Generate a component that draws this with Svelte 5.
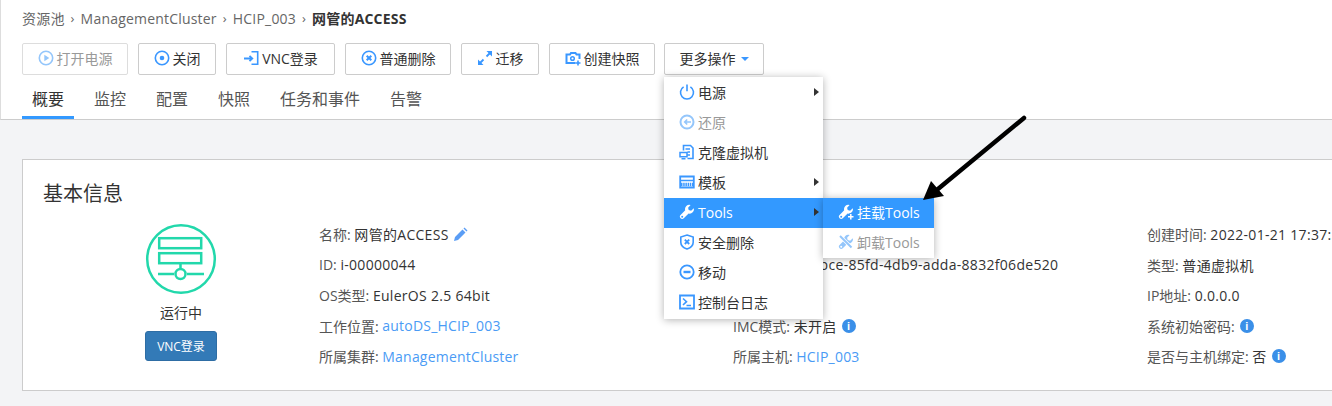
<script>
  const crumbs = ['资源池', 'ManagementCluster', 'HCIP_003'];
  const tabs = ['概要', '监控', '配置', '快照', '任务和事件', '告警'];
  const menu = [
    { icon: 'power', label: '电源', sub: true },
    { icon: 'restore', label: '还原', off: true },
    { icon: 'clone', label: '克隆虚拟机' },
    { icon: 'template', label: '模板', sub: true },
    { icon: 'tools', label: 'Tools', sub: true, on: true },
    { icon: 'shield', label: '安全删除' },
    { icon: 'move', label: '移动' },
    { icon: 'console', label: '控制台日志' }
  ];
  const col1 = [
    [['名称: '], ['网管的ACCESS', 'v'], ['pen']],
    [['ID: '], ['i-00000044', 'v']],
    [['OS类型: '], ['EulerOS 2.5 64bit', 'v']],
    [['工作位置: '], ['autoDS_HCIP_003', 'a']],
    [['所属集群: '], ['ManagementCluster', 'a']]
  ];
  const col2 = [
    [],
    [['UUID:  '], ['4e5a9bce-85fd-4db9-adda-8832f06de520', 'v']],
    [],
    [['IMC模式: '], ['未开启', 'v'], ['info']],
    [['所属主机: '], ['HCIP_003', 'a']]
  ];
  const col3 = [
    [['创建时间: '], ['2022-01-21 17:37:50', 'v']],
    [['类型: '], ['普通虚拟机', 'v']],
    [['IP地址: '], ['0.0.0.0', 'v']],
    [['系统初始密码:'], ['info']],
    [['是否与主机绑定: '], ['否', 'v'], ['info']]
  ];
</script>

{#snippet ico(name)}
  <svg class="ico" width="16" height="16" viewBox="0 0 16 16" fill="none" stroke="currentColor" stroke-width="1.6">
    {#if name === 'play'}
      <circle cx="8" cy="8" r="6.7" /><path d="M6.3 4.8v6.400L11.300 8z" fill="currentColor" stroke="none" />
    {:else if name === 'stop'}
      <circle cx="8" cy="8" r="6.7" /><circle cx="8" cy="8" r="2.300" fill="currentColor" stroke="none" />
    {:else if name === 'vnc'}
      <path d="M8.500 1.800h6.200v12.400H8.500" /><path d="M1 8.500h8M6.500 5.800 9.300 8.500l-2.800 2.700" stroke-width="1.800" />
    {:else if name === 'del'}
      <circle cx="8" cy="8" r="6.700" /><path d="M5.700 5.700l4.600 4.600M10.300 5.700l-4.600 4.600" stroke-width="2" />
    {:else if name === 'migrate'}
      <path d="M9.500 6.500 13 3M3 13l3.500-3.500" stroke-width="1.800" /><path d="M9.500 1h5.500v5.500zM1 9.500V15h5.500z" fill="currentColor" stroke="none" />
    {:else if name === 'snap'}
      <path d="M10.500 13H1.500V4.500h3.500L6 3h4.500l1 1.500h3V9" stroke-width="2" /><circle cx="7.500" cy="8.500" r="1.800" stroke-width="1.500" /><path d="M13 10.500v5M10.500 13h5" />
    {:else if name === 'power'}
      <path d="M4.600 2.900a6.500 6.500 0 1 0 6.800 0M8 .6v6.600" />
    {:else if name === 'restore'}
      <circle cx="8" cy="8" r="6.500" stroke-width="2" /><path d="M12 8H6M8.200 5.500 5.700 8l2.500 2.500" />
    {:else if name === 'clone'}
      <path d="M4.500 6.500V1.500h7l2.500 2.500v10.500H8.500" /><path d="M1 8.500h7v4.200H1zM2.500 14.700h4M6.500 5h4.500M8.500 8h2.500M8.500 11h2.500" stroke-width="1.500" />
    {:else if name === 'template'}
      <path d="M1.200 2.500h13.600v11H1.200z" stroke-width="1.800" /><path d="M1.500 6.500h13" stroke-width="1.500" /><path d="M2 10.500h12" stroke-width="3.500" stroke-dasharray="1.500 .7" />
    {:else if name === 'tools'}
      <path d="M14.800 4.300l-2.700 2.500-2.400-.7-.6-2.300L11.600 1a4.300 4.300 0 0 0-5.400 5.300L1.600 11a2.200 2.200 0 0 0 3.200 3.200l4.800-4.700a4.300 4.300 0 0 0 5.200-5.200z" fill="#fff" stroke="none" />
      <circle cx="3.200" cy="12.800" r="1" fill="#3399ff" stroke="none" />
    {:else if name === 'mount'}
      <path d="M14.800 4.300l-2.700 2.500-2.400-.7-.6-2.300L11.600 1a4.300 4.300 0 0 0-5.400 5.300L1.600 11a2.200 2.200 0 0 0 3.200 3.200l4.800-4.700a4.300 4.300 0 0 0 5.200-5.200z" fill="currentColor" stroke="none" />
      <circle cx="3.200" cy="12.800" r="1" fill="#3399ff" stroke="none" />
      <path d="M12.800 9.500v6M9.800 12.500h6" stroke="#3399ff" stroke-width="3.500" />
      <path d="M12.800 10v5.500M10 12.700h5.500" stroke-width="1.500" />
    {:else if name === 'unmount'}
      <path d="M14.800 4.300l-2.700 2.500-2.400-.7-.6-2.300L11.600 1a4.300 4.300 0 0 0-5.400 5.300L1.600 11a2.200 2.200 0 0 0 3.200 3.200l4.800-4.700a4.300 4.300 0 0 0 5.200-5.200z" fill="currentColor" stroke="none" />
      <path d="M2 2l12 12" stroke="#fff" stroke-width="3.500" />
      <path d="M2 2l11.500 11.500" stroke-width="2" />
      <circle cx="3.200" cy="12.800" r="1" fill="#fff" stroke="none" />
    {:else if name === 'shield'}
      <path d="M8 1 14.200 3v5.200c0 3.300-2.900 5.600-6.200 6.800-3.300-1.200-6.200-3.500-6.200-6.800V3z" /><path d="M5.800 5.600l4.400 4.400M10.200 5.600l-4.400 4.400" stroke-width="1.800" />
    {:else if name === 'move'}
      <circle cx="8" cy="8" r="6.700" stroke-width="1.800" /><path d="M4.500 8h7" stroke-width="2.400" />
    {:else if name === 'console'}
      <path d="M1 1.500h14v13H1z" stroke-width="1.800" /><path d="M4 4.500 7.500 7.700 4 11M7.500 11.500h4.500" />
    {/if}
  </svg>
{/snippet}

{#snippet row(parts)}
  <div class="row">
    {#each parts as p}
      {#if p[0] === 'pen'}
        <svg class="pen" width="15" height="15" viewBox="0 0 15 15"><path d="M1 14l1-4 7.500-7.500 3 3L5 13zM10.500 1.500l1-1 3 3-1 1z" fill="#5a9df5" /></svg>
      {:else if p[0] === 'info'}
        <span class="info">i</span>
      {:else if p[1] === 'v'}
        <span class="val">{p[0]}</span>
      {:else if p[1] === 'a'}
        <span class="link">{p[0]}</span>
      {:else}
        <span class="lab">{p[0]}</span>
      {/if}
    {/each}
  </div>
{/snippet}

<div class="page">
  <header class="head">
    <nav class="crumbs">
      {#each crumbs as c}
        <span>{c}</span><span class="sep">›</span>
      {/each}
      <b>网管的ACCESS</b>
    </nav>
    <div class="bar">
      <button class="btn off w106">{@render ico('play')}打开电源</button>
      <button class="btn w78">{@render ico('stop')}关闭</button>
      <button class="btn w109">{@render ico('vnc')}VNC登录</button>
      <button class="btn w106">{@render ico('del')}普通删除</button>
      <button class="btn w78">{@render ico('migrate')}迁移</button>
      <button class="btn w106">{@render ico('snap')}创建快照</button>
      <div class="more">
        <button class="btn w100">更多操作<i class="caret"></i></button>
        <ul class="menu">
          {#each menu as m}
            <li class:off={m.off} class:on={m.on}>
              {@render ico(m.icon)}<span>{m.label}</span>
              {#if m.sub}<i class="tri"></i>{/if}
              {#if m.on}
                <ul class="submenu">
                  <li class="on">{@render ico('mount')}<span>挂载Tools</span></li>
                  <li class="off">{@render ico('unmount')}<span>卸载Tools</span></li>
                </ul>
              {/if}
            </li>
          {/each}
        </ul>
      </div>
    </div>
    <div class="tabs">
      {#each tabs as t, i}
        <span class="tab" class:active={i === 0}>{t}</span>
      {/each}
    </div>
  </header>

  <main class="main">
    <section class="card">
      <h2>基本信息</h2>
      <div class="grid">
        <div class="status">
          <svg width="72" height="72" viewBox="0 0 72 72" fill="none" stroke="#22d8ab" stroke-width="2.500">
            <circle cx="36" cy="36" r="33.800" />
            <rect x="14.200" y="15.200" width="42" height="10" />
            <rect x="14.200" y="30.200" width="42" height="10" />
            <path d="M35.500 41v6M13 51h16M42 51h17" />
            <circle cx="35.500" cy="51" r="5" />
          </svg>
          <p>运行中</p>
          <button class="vnc">VNC登录</button>
        </div>
        <div class="col">{#each col1 as r}{@render row(r)}{/each}</div>
        <div class="col">{#each col2 as r}{@render row(r)}{/each}</div>
        <div class="col">{#each col3 as r}{@render row(r)}{/each}</div>
      </div>
    </section>
  </main>

  <svg class="arrow" width="110" height="90" viewBox="0 0 110 90" fill="none">
    <path d="M101 3 15 74" stroke="#000" stroke-width="4.500" stroke-linecap="round" />
    <path d="M0 85 8 66 21 81z" fill="#000" />
  </svg>
</div>

<style>
  :global(body) { margin: 0; background: #f3f4f6; }
  .page {
    position: relative;
    width: 1332px;
    height: 406px;
    overflow: hidden;
    font-family: "Open Sans", "Noto Sans CJK SC", sans-serif;
    font-size: 14px;
    color: #333;
    background: #f3f4f6;
  }
  .head {
    background: #fff;
    border-bottom: 1px solid #ccc;
    border-left: 1px solid #ddd;
    height: 119px;
    padding-left: 21px;
  }
  .crumbs {
    display: flex;
    align-items: center;
    gap: 0;
    height: 36px;
    color: #666;
    font-size: 14px;
    letter-spacing: .2px;
  }
  .crumbs b { color: #333; font-size: 14px; }
  .sep { width: 16px; text-align: center; color: #666; font-size: 13px; }
  .bar { display: flex; gap: 10px; margin-top: 7px; }
  .btn {
    display: flex;
    align-items: center;
    justify-content: center;
    gap: 3px;
    height: 32px;
    padding: 0 0 2px;
    box-sizing: border-box;
    background: #fff;
    border: 1px solid #ccc;
    border-radius: 2px;
    color: #333;
    font: inherit;
    font-size: 14px;
  }
  .btn .ico { color: #3a97ff; }
  .btn.off { color: #999; border-color: #ddd; }
  .btn.off .ico { color: #94c6fb; }
  .w106 { width: 106px; }
  .w78 { width: 78px; }
  .w109 { width: 109px; }
  .w100 { width: 100px; }
  .caret {
    width: 0; height: 0;
    margin-left: 2px; margin-top: 2px;
    border: 4px solid transparent;
    border-top-color: #3a97ff;
    border-bottom: 0;
  }
  .more { position: relative; margin-left: -1px; }
  .menu, .submenu {
    list-style: none;
    margin: 0;
    padding: 0;
    position: absolute;
    z-index: 5;
    background: #fff;
    box-shadow: 0 1px 8px rgba(0, 0, 0, 0.3);
  }
  .menu {
    left: 0;
    top: 34px;
    width: 159px;
    padding: 1px 0;
  }
  .menu li {
    position: relative;
    display: flex;
    align-items: center;
    gap: 3px;
    height: 30px;
    box-sizing: border-box;
    padding: 0 0 2px 15px;
    color: #333;
    font-size: 14px;
  }
  .menu li .ico { color: #3a97ff; }
  .menu li.off { color: #999; }
  .menu li.off .ico { color: #94c6fb; }
  .menu li.on { background: #3399ff; color: #fff; }
  .menu li.on .ico { color: #fff; }
  .menu li.off .ico { color: #94c6fb; }
  .tri {
    position: absolute;
    right: 4px;
    top: 10px;
    width: 0; height: 0;
    border: 4px solid transparent;
    border-left: 5px solid #333;
    border-right: 0;
  }
  .submenu {
    left: 159px;
    top: 0;
    width: 111px;
  }
  .submenu li { padding-left: 15px; gap: 3px; }
  .tabs { display: flex; gap: 10px; margin-top: 9px; }
  .tab {
    display: block;
    height: 35px;
    line-height: 30px;
    padding: 0 10px;
    box-sizing: border-box;
    color: #555;
    font-size: 16px;
  }
  .tab.active { color: #333; border-bottom: 3px solid #3399ff; }
  .main { padding: 39px 0 0 22px; }
  .card {
    width: 1340px;
    height: 232px;
    box-sizing: border-box;
    background: #fff;
    border: 1px solid #ccc;
    padding: 19px 20px 0;
  }
  h2 { margin: 0; font-size: 20px; font-weight: 400; line-height: 30px; color: #333; }
  .grid {
    display: grid;
    grid-template-columns: 276px 414px 414px 1fr;
    margin-top: 10px;
  }
  .status {
    display: flex;
    flex-direction: column;
    align-items: center;
    padding-top: 4px;
  }
  .status p { margin: 8px 0 0; line-height: 20px; font-size: 14px; color: #333; }
  .vnc {
    margin-top: 8px;
    width: 72px;
    height: 30px;
    padding: 0;
    background: #337ab7;
    border: 1px solid #2e6da4;
    border-radius: 3px;
    color: #fff;
    font: inherit;
    font-size: 12px;
  }
  .row {
    display: flex;
    align-items: center;
    height: 30.500px;
    white-space: pre;
  }
  .lab { color: #555; }
  .val { color: #333; letter-spacing: .3px; }
  .link { color: #4a9bf5; letter-spacing: .2px; }
  .pen { margin-left: 4px; }
  .info {
    display: inline-flex;
    align-items: center;
    justify-content: center;
    width: 14px; height: 14px;
    margin-left: 5px;
    border-radius: 50%;
    background: #3a8fe8;
    color: #fff;
    font: 700 11px "Liberation Sans", sans-serif;
  }
  .arrow { position: absolute; left: 923px; top: 115px; z-index: 9; }
</style>
